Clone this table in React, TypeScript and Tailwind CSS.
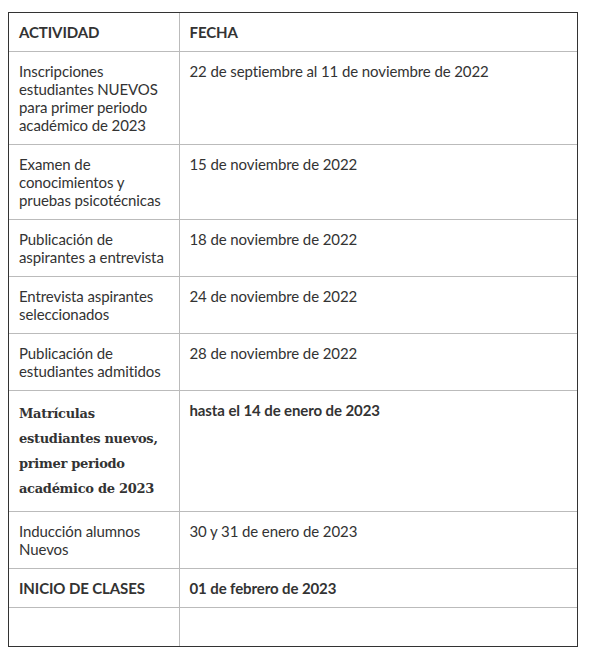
type Row = {
  actividad: string
  fecha: string
  kind?: 'head' | 'bold' | 'slab'
}

const rows: Row[] = [
  { actividad: 'ACTIVIDAD', fecha: 'FECHA', kind: 'head' },
  { actividad: 'Inscripciones estudiantes NUEVOS para primer periodo académico de 2023', fecha: '22 de septiembre al 11 de noviembre de 2022' },
  { actividad: 'Examen de conocimientos y pruebas psicotécnicas', fecha: '15 de noviembre de 2022' },
  { actividad: 'Publicación de aspirantes a entrevista', fecha: '18 de noviembre de 2022' },
  { actividad: 'Entrevista aspirantes seleccionados', fecha: '24 de noviembre de 2022' },
  { actividad: 'Publicación de estudiantes admitidos', fecha: '28 de noviembre de 2022' },
  { actividad: 'Matrículas estudiantes nuevos, primer periodo académico de 2023', fecha: 'hasta el 14 de enero de 2023', kind: 'slab' },
  { actividad: 'Inducción alumnos Nuevos', fecha: '30 y 31 de enero de 2023' },
  { actividad: 'INICIO DE CLASES', fecha: '01 de febrero de 2023', kind: 'bold' },
  { actividad: '\u00a0', fecha: '\u00a0' },
]

export default function App() {
  return (
    <div className="bg-white min-h-[660px] pt-3 pl-2 font-['Lato','Liberation_Sans',sans-serif] text-[15px] leading-[18px] tracking-[-0.1px] text-[#333]">
      <div className="w-[570px] border border-[#333]">
        <table className="w-full border-collapse table-fixed">
          <colgroup>
            <col className="w-[170px]" />
            <col />
          </colgroup>
          <tbody>
            {rows.map((row, idx) => {
              const last = idx === rows.length - 1
              const bottom = last ? '' : 'border-b border-[#bbb]'
              const first =
                row.kind === 'slab'
                  ? "font-['DejaVu_Serif',serif] font-bold text-[13px] leading-[25px] tracking-[-0.3px]"
                  : row.kind === 'head' || row.kind === 'bold'
                    ? 'font-bold'
                    : ''
              const second = row.kind ? 'font-bold' : ''
              return (
                <tr key={idx}>
                  <td className={`align-top px-[10px] py-[10px] border-r border-[#bbb] ${bottom} ${first}`}>
                    {row.actividad}
                  </td>
                  <td className={`align-top px-[10px] py-[10px] ${bottom} ${second}`}>{row.fecha}</td>
                </tr>
              )
            })}
          </tbody>
        </table>
      </div>
    </div>
  )
}
